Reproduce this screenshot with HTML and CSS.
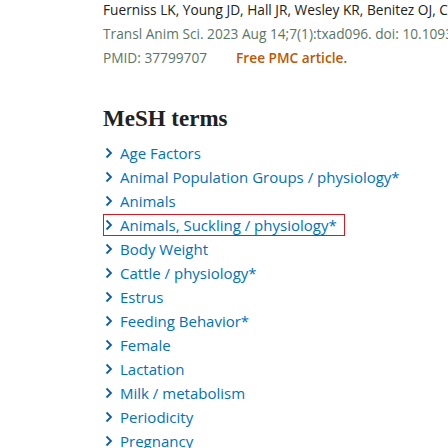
FILE: index.html
```html
<!DOCTYPE html>
<html>
<head>
<meta charset="utf-8">
<link rel="stylesheet" href="styles.css">
</head>
<body>
<div class="page">
  <div class="citation">
    <div class="authors">Fuerniss LK, Young JD, Hall JR, Wesley KR, Benitez OJ, Corley CR, Brooks JC, Johnson BJ.</div>
    <div class="journal">Transl Anim Sci. 2023 Aug 14;7(1):txad096. doi: 10.1093/tas/txad096. eCollection 2023.</div>
    <div class="ids"><span class="pmid">PMID: 37799707</span><span class="free">Free PMC article.</span></div>
  </div>
  <h2 class="heading">MeSH terms</h2>
  <ul class="terms">
    <li class="term"><svg class="chev" viewBox="0 0 8 12"><path d="M1.5 1.5 L6 6 L1.5 10.5"/></svg><span>Age Factors</span></li>
    <li class="term"><svg class="chev" viewBox="0 0 8 12"><path d="M1.5 1.5 L6 6 L1.5 10.5"/></svg><span>Animal Population Groups / physiology*</span></li>
    <li class="term"><svg class="chev" viewBox="0 0 8 12"><path d="M1.5 1.5 L6 6 L1.5 10.5"/></svg><span>Animals</span></li>
    <li class="term selected"><svg class="chev" viewBox="0 0 8 12"><path d="M1.5 1.5 L6 6 L1.5 10.5"/></svg><span>Animals, Suckling / physiology*</span></li>
    <li class="term"><svg class="chev" viewBox="0 0 8 12"><path d="M1.5 1.5 L6 6 L1.5 10.5"/></svg><span>Body Weight</span></li>
    <li class="term"><svg class="chev" viewBox="0 0 8 12"><path d="M1.5 1.5 L6 6 L1.5 10.5"/></svg><span>Cattle / physiology*</span></li>
    <li class="term"><svg class="chev" viewBox="0 0 8 12"><path d="M1.5 1.5 L6 6 L1.5 10.5"/></svg><span>Estrus</span></li>
    <li class="term"><svg class="chev" viewBox="0 0 8 12"><path d="M1.5 1.5 L6 6 L1.5 10.5"/></svg><span>Feeding Behavior*</span></li>
    <li class="term"><svg class="chev" viewBox="0 0 8 12"><path d="M1.5 1.5 L6 6 L1.5 10.5"/></svg><span>Female</span></li>
    <li class="term"><svg class="chev" viewBox="0 0 8 12"><path d="M1.5 1.5 L6 6 L1.5 10.5"/></svg><span>Lactation</span></li>
    <li class="term"><svg class="chev" viewBox="0 0 8 12"><path d="M1.5 1.5 L6 6 L1.5 10.5"/></svg><span>Milk / metabolism</span></li>
    <li class="term"><svg class="chev" viewBox="0 0 8 12"><path d="M1.5 1.5 L6 6 L1.5 10.5"/></svg><span>Periodicity</span></li>
    <li class="term"><svg class="chev" viewBox="0 0 8 12"><path d="M1.5 1.5 L6 6 L1.5 10.5"/></svg><span>Pregnancy</span></li>
  </ul>
</div>
</body>
</html>
```
FILE: styles.css
```css
html, body {
  margin: 0;
  padding: 0;
  background: #ffffff;
  overflow: hidden;
}
.page {
  padding-left: 103px;
  margin-top: -2px;
  font-family: "Open Sans", "Noto Sans", sans-serif;
  font-size: 13.7px;
  white-space: nowrap;
}
.citation {
  line-height: 24px;
}
.authors {
  color: #212121;
}
.journal {
  color: #5b7565;
}
.ids {
  display: flex;
  gap: 29px;
}
.pmid {
  color: #5b7565;
}
.free {
  color: #c05600;
  font-weight: 600;
}
.heading {
  margin: 34px 0 7px 0;
  font-family: "Liberation Serif", serif;
  font-weight: bold;
  font-size: 23px;
  line-height: 30px;
  color: #212121;
}
.terms {
  list-style: none;
  margin: 0;
  padding: 0;
}
.term {
  display: flex;
  align-items: center;
  width: fit-content;
  height: 24px;
  color: #0071bc;
  font-size: 15px;
}
.chev {
  width: 8px;
  height: 12px;
  margin-left: 2px;
  margin-right: 7px;
  fill: none;
  stroke: #0a5fa8;
  stroke-width: 1.8;
}
.selected {
  box-sizing: border-box;
  height: 22px;
  margin: 1px 0;
  border: 1px solid #e0161c;
  padding-right: 7px;
}
.selected .chev {
  margin-left: 1px;
}
```
